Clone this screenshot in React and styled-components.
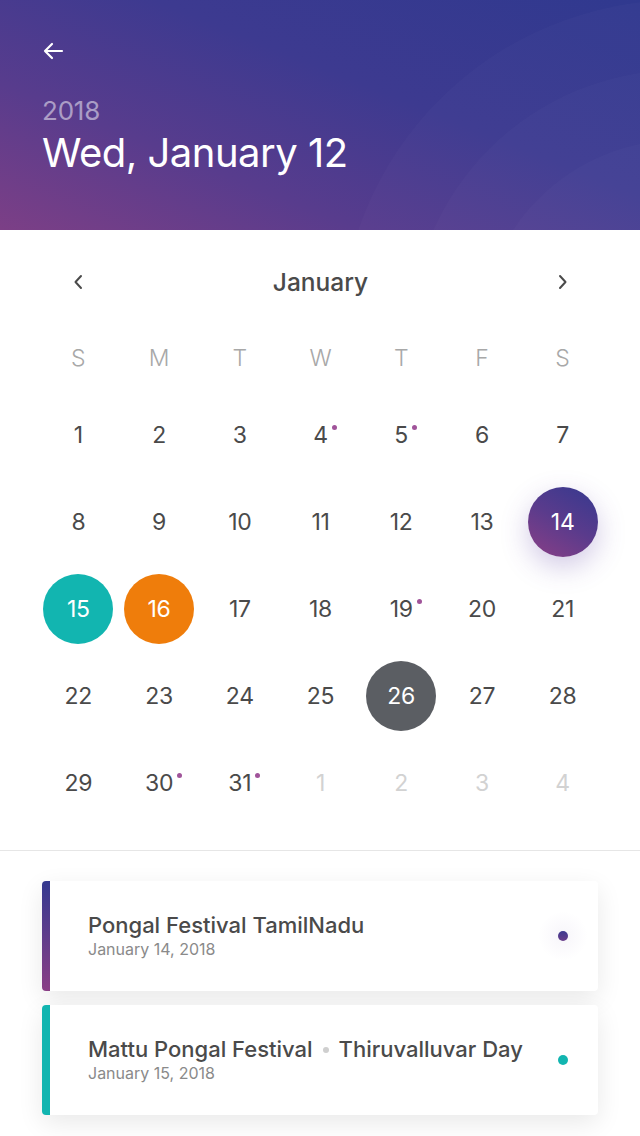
import React from "react";
import styled, { createGlobalStyle } from "styled-components";

const Global = createGlobalStyle`
  html, body { margin: 0; padding: 0; background: #fff; }
  body { font-family: Inter, "Open Sans", sans-serif; width: 640px; }
  * { box-sizing: border-box; }
`;

const Page = styled.div`
  width: 640px;
  min-height: 1136px;
  background: #fff;
`;

const Header = styled.header`
  position: relative;
  height: 230px;
  overflow: hidden;
  padding: 40px 42px 0;
  background: linear-gradient(22deg, #7c3f86 0%, #583c8d 30%, #3d3a90 60%, #30398f 100%);
  color: #fff;
`;

const Rings = styled.svg`
  position: absolute;
  right: 0;
  top: 0;
  pointer-events: none;
`;

const BackButton = styled.button`
  display: flex;
  padding: 0;
  border: 0;
  background: none;
  color: #fff;
  cursor: pointer;
  position: relative;
`;

const Year = styled.div`
  position: relative;
  margin-top: 34px;
  font-size: 26px;
  line-height: 30px;
  letter-spacing: -0.2px;
  color: rgba(255, 255, 255, 0.5);
`;

const Title = styled.h1`
  position: relative;
  margin: 4px 0 0;
  font-size: 40px;
  line-height: 46px;
  font-weight: 400;
  letter-spacing: -0.5px;
`;

const CalendarSection = styled.section`
  padding: 32px 37px 32px 38px;
  border-bottom: 1px solid #e6e6e6;
`;

const MonthNav = styled.div`
  height: 40px;
  display: grid;
  grid-template-columns: repeat(7, 1fr);
  align-items: center;
`;

const NavButton = styled.button`
  grid-column: ${(p) => p.$col};
  justify-self: center;
  display: flex;
  padding: 0;
  border: 0;
  background: none;
  color: #4a4a4a;
  cursor: pointer;
`;

const MonthName = styled.div`
  grid-column: 2 / 7;
  text-align: center;
  font-size: 24.5px;
  font-weight: 500;
  color: #4a4a4a;
`;

const WeekRow = styled.div`
  margin-top: 36px;
  height: 40px;
  display: grid;
  grid-template-columns: repeat(7, 1fr);
  align-items: center;
`;

const WeekDay = styled.div`
  text-align: center;
  font-size: 23px;
  font-weight: 300;
  color: #a8a8a8;
`;

const DaysGrid = styled.div`
  margin-top: 22px;
  display: grid;
  grid-template-columns: repeat(7, 1fr);
  grid-auto-rows: 70px;
  row-gap: 17px;
`;

const DayCell = styled.div`
  display: flex;
  align-items: center;
  justify-content: center;
`;

const circleBg = {
  purple: "linear-gradient(30deg, #8a3f86 0%, #5a3b8c 50%, #35398f 100%)",
  teal: "#12b5b0",
  orange: "#ef7d0b",
  gray: "#5b5e63",
};

const DayNumber = styled.div`
  position: relative;
  width: 70px;
  height: 70px;
  border-radius: 50%;
  display: flex;
  align-items: center;
  justify-content: center;
  font-size: 23px;
  font-weight: 400;
  letter-spacing: -0.3px;
  color: ${(p) => (p.$fill ? "#fff" : p.$muted ? "#d2d2d2" : "#4a4a4a")};
  background: ${(p) => (p.$fill ? circleBg[p.$fill] : "transparent")};
  box-shadow: ${(p) =>
    p.$fill === "purple" ? "0 10px 28px rgba(90, 60, 160, 0.28)" : "none"};
`;

const NumText = styled.span`
  position: relative;
`;

const EventDot = styled.span`
  position: absolute;
  left: 100%;
  top: 4px;
  margin-left: 4px;
  width: 5px;
  height: 5px;
  border-radius: 50%;
  background: #a0549a;
`;

const EventsSection = styled.section`
  padding: 30px 42px 20px;
  display: flex;
  flex-direction: column;
  gap: 14px;
`;

const Card = styled.div`
  height: 110px;
  display: flex;
  align-items: center;
  background: #fff;
  border-radius: 4px;
  overflow: hidden;
  box-shadow: 0 8px 26px rgba(0, 0, 0, 0.09);
`;

const CardBar = styled.div`
  align-self: stretch;
  width: 8px;
  flex: none;
  background: ${(p) => p.$color};
`;

const CardBody = styled.div`
  flex: 1;
  padding-left: 38px;
  min-width: 0;
`;

const CardTitle = styled.div`
  font-size: 22px;
  line-height: 26px;
  font-weight: 500;
  color: #4a4a4a;
  white-space: nowrap;
  display: flex;
  align-items: center;
`;

const Sep = styled.span`
  display: inline-block;
  width: 6px;
  height: 6px;
  border-radius: 50%;
  background: #cfcfcf;
  margin: 2px 10px 0;
`;

const CardDate = styled.div`
  font-size: 16px;
  line-height: 22px;
  color: #8a8a8a;
`;

const DotHalo = styled.div`
  flex: none;
  width: 50px;
  height: 50px;
  margin-right: 10px;
  border-radius: 50%;
  display: flex;
  align-items: center;
  justify-content: center;
  background: ${(p) => (p.$glow ? "radial-gradient(circle, rgba(120,90,170,0.06) 0%, rgba(120,90,170,0) 70%)" : "transparent")};
`;

const CardDot = styled.div`
  width: 10px;
  height: 10px;
  border-radius: 50%;
  background: ${(p) => p.$color};
`;

const weekdays = ["S", "M", "T", "W", "T", "F", "S"];

const days = [
  ...Array.from({ length: 31 }, (_, i) => ({ n: i + 1 })),
  { n: 1, muted: true },
  { n: 2, muted: true },
  { n: 3, muted: true },
  { n: 4, muted: true },
];
const dotted = new Set([4, 5, 19, 30, 31]);
const fills = { 14: "purple", 15: "teal", 16: "orange", 26: "gray" };

const events = [
  {
    color: "linear-gradient(180deg, #34398f 0%, #8a3f86 100%)",
    dot: "linear-gradient(180deg, #3d3a90, #6a3d8a)",
    glow: true,
    title: ["Pongal Festival TamilNadu"],
    date: "January 14, 2018",
  },
  {
    color: "#12b5b0",
    dot: "#12b5b0",
    title: ["Mattu Pongal Festival", "Thiruvalluvar Day"],
    date: "January 15, 2018",
  },
];

function Chevron({ dir }) {
  return (
    <svg width="14" height="20" viewBox="0 0 14 20" fill="none">
      <path
        d={dir === "left" ? "M10 4 L4.5 10 L10 16" : "M4 4 L9.5 10 L4 16"}
        stroke="currentColor"
        strokeWidth="2"
        strokeLinecap="round"
        strokeLinejoin="round"
      />
    </svg>
  );
}

export default function App() {
  return (
    <Page>
      <Global />
      <Header>
        <Rings width="300" height="230" viewBox="0 0 300 230">
          <circle cx="340" cy="340" r="340" fill="rgba(255,255,255,0.02)" />
          <circle cx="340" cy="340" r="270" fill="rgba(255,255,255,0.02)" />
          <circle cx="340" cy="340" r="200" fill="rgba(255,255,255,0.02)" />
        </Rings>
        <BackButton aria-label="Back">
          <svg width="22" height="22" viewBox="0 0 22 22" fill="none">
            <path
              d="M20 11 H3 M10 4 L3 11 L10 18"
              stroke="currentColor"
              strokeWidth="2.2"
              strokeLinecap="round"
              strokeLinejoin="round"
            />
          </svg>
        </BackButton>
        <Year>2018</Year>
        <Title>Wed, January 12</Title>
      </Header>

      <CalendarSection>
        <MonthNav>
          <NavButton $col={1} aria-label="Previous month">
            <Chevron dir="left" />
          </NavButton>
          <MonthName>January</MonthName>
          <NavButton $col={7} aria-label="Next month">
            <Chevron dir="right" />
          </NavButton>
        </MonthNav>
        <WeekRow>
          {weekdays.map((d, i) => (
            <WeekDay key={i}>{d}</WeekDay>
          ))}
        </WeekRow>
        <DaysGrid>
          {days.map((d, i) => (
            <DayCell key={i}>
              <DayNumber $muted={d.muted} $fill={!d.muted ? fills[d.n] : undefined}>
                <NumText>
                  {d.n}
                  {!d.muted && dotted.has(d.n) && <EventDot />}
                </NumText>
              </DayNumber>
            </DayCell>
          ))}
        </DaysGrid>
      </CalendarSection>

      <EventsSection>
        {events.map((e, i) => (
          <Card key={i}>
            <CardBar $color={e.color} />
            <CardBody>
              <CardTitle>
                {e.title.map((t, j) => (
                  <React.Fragment key={j}>
                    {j > 0 && <Sep />}
                    {t}
                  </React.Fragment>
                ))}
              </CardTitle>
              <CardDate>{e.date}</CardDate>
            </CardBody>
            <DotHalo $glow={e.glow}>
              <CardDot $color={e.dot} />
            </DotHalo>
          </Card>
        ))}
      </EventsSection>
    </Page>
  );
}
